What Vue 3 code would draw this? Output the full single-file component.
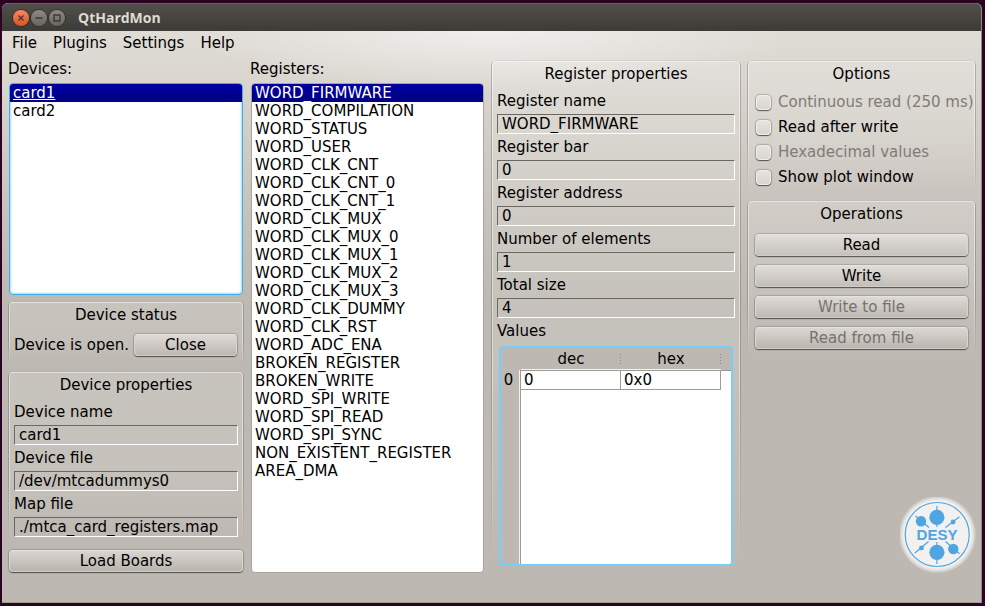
<script setup>
import { ref } from 'vue'

const menus = ['File', 'Plugins', 'Settings', 'Help']
const devices = ['card1', 'card2']
const registers = [
  'WORD_FIRMWARE', 'WORD_COMPILATION', 'WORD_STATUS', 'WORD_USER',
  'WORD_CLK_CNT', 'WORD_CLK_CNT_0', 'WORD_CLK_CNT_1',
  'WORD_CLK_MUX', 'WORD_CLK_MUX_0', 'WORD_CLK_MUX_1', 'WORD_CLK_MUX_2', 'WORD_CLK_MUX_3',
  'WORD_CLK_DUMMY', 'WORD_CLK_RST', 'WORD_ADC_ENA', 'BROKEN_REGISTER', 'BROKEN_WRITE',
  'WORD_SPI_WRITE', 'WORD_SPI_READ', 'WORD_SPI_SYNC', 'NON_EXISTENT_REGISTER', 'AREA_DMA'
]
const device = ref('card1')
const register = ref('WORD_FIRMWARE')

const deviceFields = [
  { id: 'dev-name', label: 'Device name', value: 'card1' },
  { id: 'dev-file', label: 'Device file', value: '/dev/mtcadummys0' },
  { id: 'dev-map', label: 'Map file', value: './mtca_card_registers.map' }
]
const registerFields = [
  { id: 'reg-name', label: 'Register name', value: 'WORD_FIRMWARE' },
  { id: 'reg-bar', label: 'Register bar', value: '0' },
  { id: 'reg-address', label: 'Register address', value: '0' },
  { id: 'reg-elements', label: 'Number of elements', value: '1' },
  { id: 'reg-size', label: 'Total size', value: '4' }
]
const options = [
  { label: 'Continuous read (250 ms)', disabled: true },
  { label: 'Read after write', disabled: false },
  { label: 'Hexadecimal values', disabled: true },
  { label: 'Show plot window', disabled: false }
]
const operations = [
  { label: 'Read', disabled: false },
  { label: 'Write', disabled: false },
  { label: 'Write to file', disabled: true },
  { label: 'Read from file', disabled: true }
]
</script>

<template>
  <div class="desktop">
    <div class="window">
      <header class="titlebar">
        <button class="wm wm-close" type="button" aria-label="Close window">
          <svg viewBox="0 0 16 16"><path d="M5.5 5.5l5 5M10.5 5.5l-5 5" /></svg>
        </button>
        <button class="wm" type="button" aria-label="Minimize">
          <svg viewBox="0 0 16 16"><path d="M4.5 8h7" /></svg>
        </button>
        <button class="wm" type="button" aria-label="Maximize">
          <svg viewBox="0 0 16 16"><path d="M5 5h6v6h-6z" /></svg>
        </button>
        <h1>QtHardMon</h1>
      </header>

      <nav class="menubar">
        <button v-for="m in menus" :key="m" type="button">{{ m }}</button>
      </nav>

      <main class="content">
        <section class="column">
          <div class="list-block">
            <div id="devices-label" class="caption">Devices:</div>
            <ul class="list focused" role="listbox" aria-labelledby="devices-label" tabindex="0">
              <li
                v-for="d in devices" :key="d" role="option"
                :class="{ selected: d === device }" :aria-selected="d === device"
                @click="device = d"
              ><span>{{ d }}</span></li>
            </ul>
          </div>

          <section class="group">
            <h2>Device status</h2>
            <div class="status-row">
              <span>Device is open.</span>
              <button class="push" type="button">Close</button>
            </div>
          </section>

          <section class="group device-properties">
            <h2>Device properties</h2>
            <div v-for="f in deviceFields" :key="f.id" class="field">
              <label :for="f.id">{{ f.label }}</label>
              <input :id="f.id" type="text" readonly :value="f.value">
            </div>
          </section>

          <button class="push load" type="button">Load Boards</button>
        </section>

        <section class="column">
          <div class="list-block">
            <div id="registers-label" class="caption">Registers:</div>
            <ul class="list" role="listbox" aria-labelledby="registers-label" tabindex="0">
              <li
                v-for="r in registers" :key="r" role="option"
                :class="{ selected: r === register }" :aria-selected="r === register"
                @click="register = r"
              ><span>{{ r }}</span></li>
            </ul>
          </div>
        </section>

        <section class="group register-properties">
          <h2>Register properties</h2>
          <div v-for="f in registerFields" :key="f.id" class="field">
            <label :for="f.id">{{ f.label }}</label>
            <input :id="f.id" type="text" readonly :value="f.value">
          </div>
          <div id="values-label">Values</div>
          <div class="values">
            <table aria-labelledby="values-label">
              <thead>
                <tr>
                  <th class="corner"></th>
                  <th class="value-head">dec</th>
                  <th class="value-head">hex</th>
                  <th></th>
                </tr>
              </thead>
              <tbody>
                <tr>
                  <th class="row-head" scope="row">0</th>
                  <td>0</td>
                  <td>0x0</td>
                  <td class="filler"></td>
                </tr>
              </tbody>
            </table>
            <div class="viewport"></div>
          </div>
        </section>

        <section class="column">
          <section class="group options">
            <h2>Options</h2>
            <label v-for="o in options" :key="o.label" :class="{ disabled: o.disabled }">
              <input type="checkbox" :disabled="o.disabled">
              <span>{{ o.label }}</span>
            </label>
          </section>

          <section class="group operations">
            <h2>Operations</h2>
            <button v-for="o in operations" :key="o.label" class="push" type="button" :disabled="o.disabled">
              {{ o.label }}
            </button>
          </section>

          <svg class="logo" viewBox="0 0 76 76" role="img" aria-label="DESY">
            <defs>
              <radialGradient id="glow">
                <stop offset="0.86" stop-color="#f2f1f0" />
                <stop offset="0.92" stop-color="#f2f1f0" stop-opacity="0.7" />
                <stop offset="1" stop-color="#f2f1f0" stop-opacity="0" />
              </radialGradient>
            </defs>
            <circle cx="37.4" cy="37.5" r="39" fill="url(#glow)" />
            <g fill="none" stroke="#4ea5e2" stroke-width="1.2">
              <circle cx="37.2" cy="37.5" r="32" />
              <path d="M36.9 9v21M36.9 45v22M15.5 19l13.5 11.5M59.5 19.7L45.5 30.5M14.8 56L28.5 44.5M59.5 56.7L45.5 44.5" />
            </g>
            <g fill="#4ea5e2">
              <circle cx="36.9" cy="20.4" r="7.6" />
              <circle cx="36.9" cy="55.3" r="7.6" />
              <circle cx="21" cy="24.2" r="5.2" />
              <circle cx="53.3" cy="52" r="5.2" />
              <circle cx="53.1" cy="25" r="2.4" />
              <circle cx="21.5" cy="51" r="2.4" />
              <text x="37" y="43" text-anchor="middle">DESY</text>
            </g>
          </svg>
        </section>
      </main>
    </div>
  </div>
</template>

<style>
body {
  margin: 0;
  background: #2a0420;
}
</style>

<style scoped>
* {
  box-sizing: border-box;
}

.desktop {
  min-height: 100vh;
  padding: 3px 3px 3px 2px;
  display: flex;
  background: #2a0420;
  color: #000;
  font: 15px/18px "DejaVu Sans", sans-serif;
}

.window {
  flex: 1;
  min-width: 0;
  display: flex;
  flex-direction: column;
  border-right: 1px solid #8f8b86;
  border-bottom: 1px solid #a19c96;
  border-radius: 6px 6px 0 0;
  overflow: hidden;
  background:
    radial-gradient(ellipse 300px 60px at 50% 28px, rgba(243, 243, 241, 0.8), rgba(243, 243, 241, 0)),
    linear-gradient(#e0dcd6 28px, #d5d1ca 110px, #c8c3bc 200px, #bdb8b1 300px);
}

button {
  font: inherit;
  color: inherit;
}

.titlebar {
  display: flex;
  align-items: center;
  gap: 2px;
  height: 28px;
  padding: 0 11px;
  background: linear-gradient(#504f49, #3c3b37);
  border-top: 1px solid #65635b;
}

.titlebar h1 {
  margin: 0 0 0 11px;
  color: #dfdbd2;
  font: bold 14px/18px "Open Sans", "Noto Sans", sans-serif;
}

.wm {
  width: 16px;
  height: 16px;
  padding: 0;
  border: 0;
  border-radius: 50%;
  background: linear-gradient(#8d8b83, #66645d);
  box-shadow: 0 0 0 1px #33322e;
}

.wm-close {
  background: linear-gradient(#f68a60, #e2501f);
}

.wm svg {
  display: block;
  fill: none;
  stroke: #3a3833;
  stroke-width: 1.3;
}

.menubar {
  display: flex;
  gap: 16px;
  padding: 3px 10px 8px;
}

.menubar button {
  padding: 0;
  border: 0;
  background: none;
}

.content {
  flex: 1;
  display: grid;
  grid-template-columns: minmax(0, 236fr) minmax(0, 235fr) minmax(0, 250fr) minmax(0, 229fr);
  gap: 6px;
  padding: 0 5px 29px 6px;
}

.column {
  display: flex;
  flex-direction: column;
  gap: 6px;
}

.list-block {
  flex: 1;
  display: flex;
  flex-direction: column;
  gap: 5px;
}

.list {
  flex: 1;
  margin: 0 1px;
  padding: 0;
  list-style: none;
  background: #fff;
  border: 1px solid #aaa69f;
  border-radius: 4px;
}

.list.focused {
  border-color: #3daee9;
  box-shadow: inset 0 0 2px 1px #a5dcf8;
  outline: none;
}

.list li {
  padding: 0 3px;
}

.list .selected {
  color: #fff;
  background: linear-gradient(#0000a4, #000080);
  border-radius: 3px 3px 0 0;
}

.focused .selected span {
  text-decoration: underline;
}

.group {
  position: relative;
  display: flex;
  flex-direction: column;
  gap: 4px;
  padding: 5px 6px 7px;
  border-radius: 5px;
  background: linear-gradient(rgba(255, 255, 255, 0.16), rgba(255, 255, 255, 0.12) 60%, rgba(255, 255, 255, 0));
}

.group::before {
  content: "";
  position: absolute;
  inset: 0;
  border: 1px solid rgba(0, 0, 0, 0.22);
  border-top-color: rgba(0, 0, 0, 0.08);
  border-radius: 5px;
  box-shadow: inset 0 0 0 1px rgba(255, 255, 255, 0.45);
  mask: linear-gradient(#000 60%, transparent 98%);
  pointer-events: none;
}

.group h2 {
  margin: 0 0 5px;
  font-size: 15px;
  font-weight: normal;
  text-align: center;
}

.status-row {
  display: flex;
  align-items: center;
  gap: 5px;
  padding: 1px 1px 2px 0;
}

.status-row span {
  white-space: nowrap;
}

.status-row .push {
  flex: 1;
}

.field {
  display: flex;
  flex-direction: column;
  gap: 4px;
}

.field input {
  width: 100%;
  height: 20px;
  padding: 0 4px;
  font: inherit;
  color: inherit;
  background: transparent;
  border: 1px solid;
  border-color: #6b6864 #fff #fff #6b6864;
  border-radius: 0;
}

.push {
  height: 22px;
  padding: 0 6px;
  border: 1px solid;
  border-color: #e6e3df #d9d6d1 #d0ccc6;
  border-radius: 4px;
  background: linear-gradient(rgba(255, 255, 255, 0.4), rgba(160, 150, 140, 0.1));
  box-shadow: 0 1px 1px 0 rgba(0, 0, 0, 0.5), 0 0 1px 1px rgba(0, 0, 0, 0.16);
}

.push:disabled {
  color: #75726e;
}

.load {
  margin: 0 1px 1px;
}

.values {
  flex: 1;
  display: flex;
  flex-direction: column;
  margin: 2px 2px 0;
  border: 2px solid #74d0fa;
  border-radius: 4px;
  overflow: hidden;
  background: #bdb8b1;
}

.values table {
  width: 100%;
  table-layout: fixed;
  border-collapse: separate;
  border-spacing: 0;
}

.values th {
  height: 22px;
  padding: 0;
  font-weight: normal;
}

.values .corner {
  width: 20px;
}

.value-head {
  width: 100px;
  box-shadow: inset 0 -1px #f4f2f0;
}

.value-head::after {
  content: "";
  float: right;
  width: 1px;
  height: 10px;
  margin: 4px 0 0 -1px;
  background: repeating-linear-gradient(#8d8983 0 1px, transparent 1px 3px);
}

.values td {
  height: 20px;
  padding: 0 3px;
  background: #fff;
  border: solid #9f9c98;
  border-width: 1px 1px 1px 0;
}

.values .row-head {
  height: 20px;
  padding-right: 4px;
  border-right: 1px solid #9f9c98;
  box-shadow: inset -1px 0 #f4f2f0;
}

.values .filler {
  border-width: 1px 0 0;
}

.viewport {
  flex: 1;
  margin-left: 18px;
  background: #fff;
  border-left: 1px solid #f4f2f0;
  box-shadow: inset 1px 0 #9f9c98;
}

.options {
  gap: 7px;
  padding-bottom: 8px;
}

.options h2 {
  margin-bottom: 3px;
}

.options label {
  display: flex;
  align-items: center;
  gap: 7px;
  padding-left: 3px;
  white-space: nowrap;
}

.options input {
  appearance: none;
  flex: none;
  width: 15px;
  height: 15px;
  margin: 0;
  border: 1px solid #f0eeeb;
  border-radius: 4px;
  background: linear-gradient(#e6e3de, #d9d5ce);
  box-shadow: 0 1px 1px rgba(0, 0, 0, 0.5), 0 0 1px 1px rgba(0, 0, 0, 0.2);
}

.options .disabled {
  color: #7f7c77;
}

.operations {
  gap: 9px;
  padding: 5px 8px 10px;
}

.operations h2 {
  margin-bottom: 2px;
}

.logo {
  width: 76px;
  height: 76px;
  margin-top: auto;
  align-self: flex-end;
}

.logo text {
  font: bold 15px "Liberation Sans", sans-serif;
}
</style>
